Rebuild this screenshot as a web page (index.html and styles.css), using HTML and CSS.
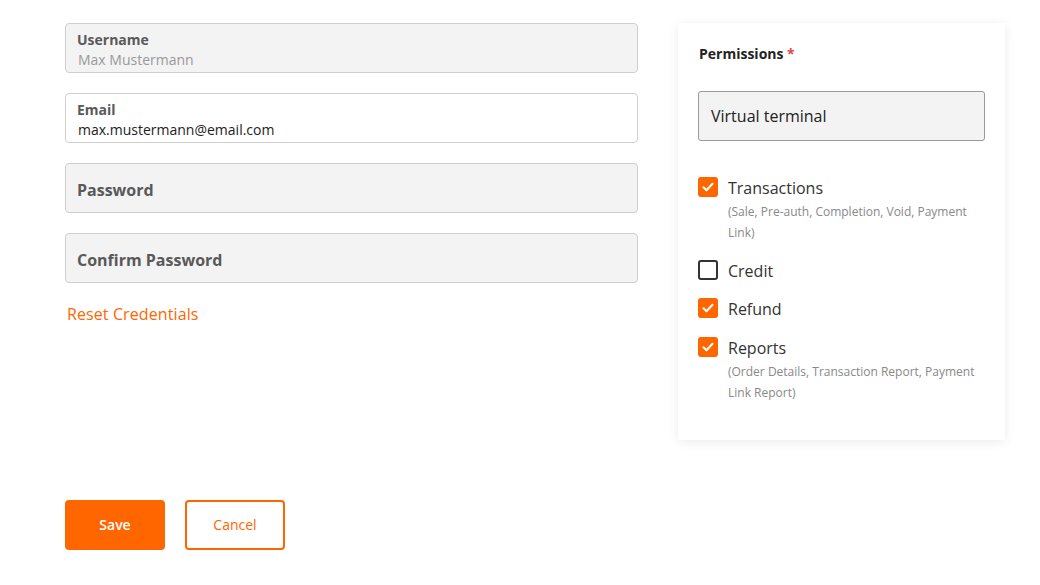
FILE: index.html
```html
<!DOCTYPE html>
<html>
<head>
<meta charset="utf-8">
<link rel="stylesheet" href="styles.css">
</head>
<body>
<div class="page">
  <div class="top">
    <div class="form">
      <div class="field disabled">
        <div class="f-label">Username</div>
        <div class="f-value muted">Max Mustermann</div>
      </div>
      <div class="field white">
        <div class="f-label">Email</div>
        <div class="f-value">max.mustermann@email.com</div>
      </div>
      <div class="field empty">
        <div class="f-placeholder">Password</div>
      </div>
      <div class="field empty">
        <div class="f-placeholder">Confirm Password</div>
      </div>
      <a class="reset">Reset Credentials</a>
    </div>
    <div class="card">
      <div class="perm-title">Permissions <span class="req">*</span></div>
      <div class="select">Virtual terminal</div>
      <div class="checks">
        <div class="item">
          <span class="box on"><svg viewBox="0 0 20 20" width="20" height="20"><path d="M5.5 10.2l3 3 6-6.4" fill="none" stroke="#fff" stroke-width="2" stroke-linecap="round" stroke-linejoin="round"/></svg></span>
          <div class="txt">
            <div class="name">Transactions</div>
            <div class="desc">(Sale, Pre-auth, Completion, Void, Payment Link)</div>
          </div>
        </div>
        <div class="item">
          <span class="box off"></span>
          <div class="txt"><div class="name">Credit</div></div>
        </div>
        <div class="item">
          <span class="box on"><svg viewBox="0 0 20 20" width="20" height="20"><path d="M5.5 10.2l3 3 6-6.4" fill="none" stroke="#fff" stroke-width="2" stroke-linecap="round" stroke-linejoin="round"/></svg></span>
          <div class="txt"><div class="name">Refund</div></div>
        </div>
        <div class="item">
          <span class="box on"><svg viewBox="0 0 20 20" width="20" height="20"><path d="M5.5 10.2l3 3 6-6.4" fill="none" stroke="#fff" stroke-width="2" stroke-linecap="round" stroke-linejoin="round"/></svg></span>
          <div class="txt">
            <div class="name">Reports</div>
            <div class="desc">(Order Details, Transaction Report, Payment Link Report)</div>
          </div>
        </div>
      </div>
    </div>
  </div>
  <div class="actions">
    <button class="btn save">Save</button>
    <button class="btn cancel">Cancel</button>
  </div>
</div>
</body>
</html>
```
FILE: styles.css
```css
* { box-sizing: border-box; }
html, body { margin: 0; padding: 0; background: #fff; }
body { font-family: "Open Sans", "Liberation Sans", sans-serif; color: #333; }
.page { padding: 23px 0 0 65px; }
.top { display: flex; align-items: flex-start; gap: 40px; }
.form { width: 573px; display: flex; flex-direction: column; gap: 20px; }
.field {
  height: 50px;
  border: 1px solid #cfcfcf;
  border-radius: 4px;
  background: #f3f3f3;
  padding: 6px 11px 0;
}
.field.white { background: #fff; }
.f-label { font-size: 14px; font-weight: 700; line-height: 20px; color: #595959; }
.f-value { font-size: 14px; line-height: 20px; color: #222; padding-left: 1px; }
.f-value.muted { color: #999; }
.field.empty { padding-top: 2px; }
.f-placeholder { font-size: 16px; font-weight: 700; color: #595959; line-height: 48px; }
.reset { color: #ff6600; font-size: 16px; line-height: 22px; padding-left: 2px; letter-spacing: 0.1px; cursor: pointer; }
.card {
  width: 327px;
  background: #fff;
  box-shadow: 0 2px 10px rgba(0,0,0,0.08);
  padding: 21px 20px 37px;
}
.perm-title { font-size: 14px; font-weight: 700; line-height: 19px; color: #222; padding-left: 1px; }
.req { color: #e04848; }
.select {
  margin-top: 28px;
  height: 50px;
  border: 1px solid #999;
  border-radius: 3px;
  background: #f3f3f3;
  padding: 0 12px;
  font-size: 16px;
  line-height: 48px;
  color: #222;
}
.checks { margin-top: 36px; display: flex; flex-direction: column; gap: 16.5px; }
.item { display: flex; gap: 10px; align-items: flex-start; }
.box { width: 20px; height: 20px; border-radius: 3px; flex: none; display: block; }
.box svg { display: block; }
.box.on { background: #ff6600; }
.box.off { border: 2px solid #333; }
.name { font-size: 16px; line-height: 22px; color: #333; }
.desc { font-size: 12px; line-height: 21px; color: #888; margin-top: 2px; }
.actions { margin-top: 60px; display: flex; gap: 20px; }
.btn {
  width: 100px; height: 50px; border-radius: 4px;
  font-family: "Open Sans", "Liberation Sans", sans-serif;
  font-size: 14px; cursor: pointer;
}
.save { background: #ff6600; color: #fff; border: none; font-weight: 600; }
.cancel { background: #fff; color: #ff6600; border: 2px solid #ff6600; }
```
